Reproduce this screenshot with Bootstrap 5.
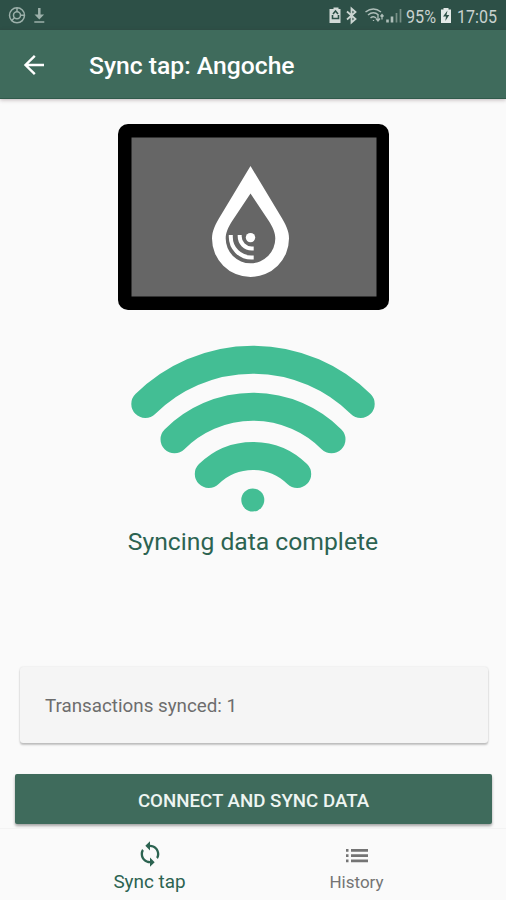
<!DOCTYPE html>
<html lang="en">
<head>
<meta charset="utf-8">
<meta name="viewport" content="width=device-width, initial-scale=1">
<title>Sync tap: Angoche</title>
<link href="https://cdn.jsdelivr.net/npm/bootstrap@5.3.0/dist/css/bootstrap.min.css" rel="stylesheet">
<style>
:root{--brand:#3f6b5c;--brand-dark:#2d5047;--accent:#43be94;--page:#fafafa}
body{font-family:Roboto,"Liberation Sans",sans-serif;background:var(--page);height:900px;overflow:hidden}
svg{display:block;flex:none}
.status-bar{height:30px;background:var(--brand-dark);color:#c3cdca;padding:0 9px 0 8px}
.status-text{font-size:18.5px;line-height:30px;white-space:nowrap;padding-top:2px}
.status-text svg{overflow:visible}
.app-bar{height:69px;background:var(--brand);border-bottom:1px solid #305a4b;box-shadow:0 1px 4px rgba(60,30,40,.3);padding:3px 0 0 22px;z-index:1}
.app-title{font-size:24.7px;font-weight:500;line-height:30px;margin-left:43px;padding-top:1px;white-space:nowrap}
.sync-area{height:565px;padding-top:25px}
.sync-message{font-size:24.700px;line-height:30px;color:#2c6351;white-space:nowrap;margin-top:12px}
.result-card{height:76px;margin:3px 18px 0 20px;padding:2px 0 0 25px;background:#f5f5f5;border-radius:3px;box-shadow:0 2px 2px rgba(0,0,0,.22),0 0 2px rgba(0,0,0,.12);color:#6d6d6d;font-size:18.8px}
.btn-sync,.btn-sync:hover{height:50px;margin:31px 14px 0 15px;padding:4px 0 0;background:var(--brand);color:#eef5f2;border:0;border-radius:2px;font-size:18.7px;font-weight:500;box-shadow:0 2px 3px rgba(0,0,0,.35)}
.tab-bar{height:72px;margin-top:4px;border-top:1px solid #f3f3f3;padding:0 46px}
.tab-link{color:#747474;font-size:17px;line-height:22px;padding-top:11px}
.tab-link span{margin-top:3px}
.tab-link.active{color:#2c6351;font-size:18.9px}
</style>
<script src="https://cdn.jsdelivr.net/npm/bootstrap@5.3.0/dist/js/bootstrap.bundle.min.js"></script>
</head>
<body class="d-flex flex-column">
<div class="status-bar d-flex justify-content-between align-items-center flex-shrink-0">
  <svg width="40" height="30" fill="none" stroke="#9cb0aa" stroke-width="1.5">
    <circle cx="9" cy="15.300" r="7.500"/><circle cx="9" cy="15.300" r="3.500"/><path d="M9 8v4M12.500 15.300h4M6.500 17.800l-3 3"/>
    <path d="M31.300 8v9" stroke-width="2.500"/><path d="M26.500 14.500h9.600l-4.800 5zM26.300 21.300h10v1.500h-10z" fill="#9cb0aa" stroke="none"/>
  </svg>
  <div class="d-flex align-items-center">
    <svg width="77" height="30">
      <path d="M3 8h2V6.500h5V8h2v14H1V8z" fill="#d2dad7" transform="translate(-.5 1)"/>
      <path d="M4 14l2.500-3 2.500 3M3.500 15v3.500h6V15" fill="none" stroke="#2d5047" stroke-width="1.600"/>
      <path d="M18 11.500l8.500 7.500-4 3.500v-14l4 3.500-8.500 7.500" fill="none" stroke="#cbd5d1" stroke-width="1.800"/>
      <g fill="none" stroke="#aebeb9" stroke-width="1.500"><path d="M36.500 12q8-6 15.500 0M39 15q5.500-4.500 10.500 0M41.500 18q3-2.500 5.500 0"/><path d="M44.500 20v1M49 15v5.500M47 18.500l2 2.500 2-2.500M53 19.500v-5M51.500 16.500l1.500-2 1.500 2" stroke-width="1.300"/></g>
      <g stroke-width="2.600"><path d="M58.500 22.500v-3M63 22.500v-6" stroke="#aebeb9"/><path d="M67.500 22.500V13M71.500 22.500V9" stroke="#789087" stroke-width="1.700"/></g>
    </svg>
    <div class="status-text"><svg width="30" height="26" fill="#c9d2cf"><text x="0" y="20" textLength="30" lengthAdjust="spacingAndGlyphs">95%</text></svg></div>
    <svg class="ms-1" width="17" height="30"><path d="M3.500 9.500V8h5v1.500H11V23H1V9.500z" fill="#e3e9e7"/><path d="M7.500 10.500l-4.500 6h3l-.7 4.500 4-6H6.500z" fill="#2d5047"/></svg>
    <div class="status-text"><svg width="40" height="26" fill="#c9d2cf"><text x="0" y="20" textLength="40" lengthAdjust="spacingAndGlyphs">17:05</text></svg></div>
  </div>
</div>
<header class="app-bar d-flex align-items-center flex-shrink-0 position-relative text-white">
  <svg width="24" height="26" fill="none" stroke="#fff" stroke-width="2.400"><path d="M22 12H3.500M12.800 2.800L3.500 12l9.300 9.200"/></svg>
  <h1 class="app-title mb-0">Sync tap: Angoche</h1>
</header>
<main class="d-flex flex-column flex-grow-1">
  <section class="sync-area d-flex flex-column align-items-center flex-shrink-0">
    <svg width="271" height="186" role="img" aria-label="Tablet">
      <rect width="271" height="186" rx="10"/>
      <rect x="13.500" y="13.500" width="245" height="159" fill="#666"/>
      <path fill="#fff" fill-rule="evenodd" d="M132.500 42L162 91C168 101 171 107 171 114.500A38.500 38.500 0 0 1 94 114.500C94 107 97 101 103 91ZM132.500 69.500L150.500 96.500C155 103.500 157.300 109 157.300 114.500A24.800 24.800 0 0 1 107.700 114.500C107.700 109 110 103.500 114.500 96.500Z"/>
      <circle cx="132.500" cy="113.600" r="4.700" fill="#fff"/>
      <path d="M121.700 111v1.500a12 12 0 0 0 12 12h2M112.800 111v2a20.500 20.500 0 0 0 20.500 20.500h2.400" fill="none" stroke="#fff" stroke-width="4"/>
    </svg>
    <svg width="244" height="205" fill="none" stroke="#43be94" stroke-width="28" stroke-linecap="round" role="img" aria-label="Wireless signal">
      <path d="M14.300 94A153 153 0 0 1 229.700 94M43.500 129.300A111 111 0 0 1 200.500 129.300M77.800 164A63 63 0 0 1 166.200 164"/>
      <circle cx="121.800" cy="190" r="11.500" fill="#43be94" stroke="none"/>
    </svg>
    <p class="sync-message mb-0">Syncing data complete</p>
  </section>
  <div class="result-card d-flex align-items-center flex-shrink-0">Transactions synced: 1</div>
  <button class="btn btn-sync flex-shrink-0" type="button">CONNECT AND SYNC DATA</button>
  <nav class="tab-bar row g-0 text-center flex-shrink-0">
    <a href="#" class="tab-link active col d-flex flex-column align-items-center text-decoration-none">
      <svg width="28" height="28" viewBox="0 0 24 24" fill="#2c6351"><path d="M12 4V1L8 5l4 4V6c3.310 0 6 2.690 6 6 0 1.010-.25 1.970-.7 2.800l1.460 1.460C19.540 15.030 20 13.570 20 12c0-4.420-3.580-8-8-8zm0 14c-3.310 0-6-2.690-6-6 0-1.010.25-1.970.7-2.800L5.240 7.740C4.460 8.970 4 10.430 4 12c0 4.420 3.580 8 8 8v3l4-4-4-4v3z"/></svg>
      <span>Sync tap</span>
    </a>
    <a href="#" class="tab-link col d-flex flex-column align-items-center text-decoration-none">
      <svg width="28" height="28" fill="#747474"><path d="M3 9h2.500v2.800H3zm0 5.200h2.500v2.800H3zm0 5.200h2.500v2.800H3zM8 9h17v2.800H8zm0 5.200h17v2.800H8zm0 5.200h17v2.800H8z"/></svg>
      <span>History</span>
    </a>
  </nav>
</main>
</body>
</html>
